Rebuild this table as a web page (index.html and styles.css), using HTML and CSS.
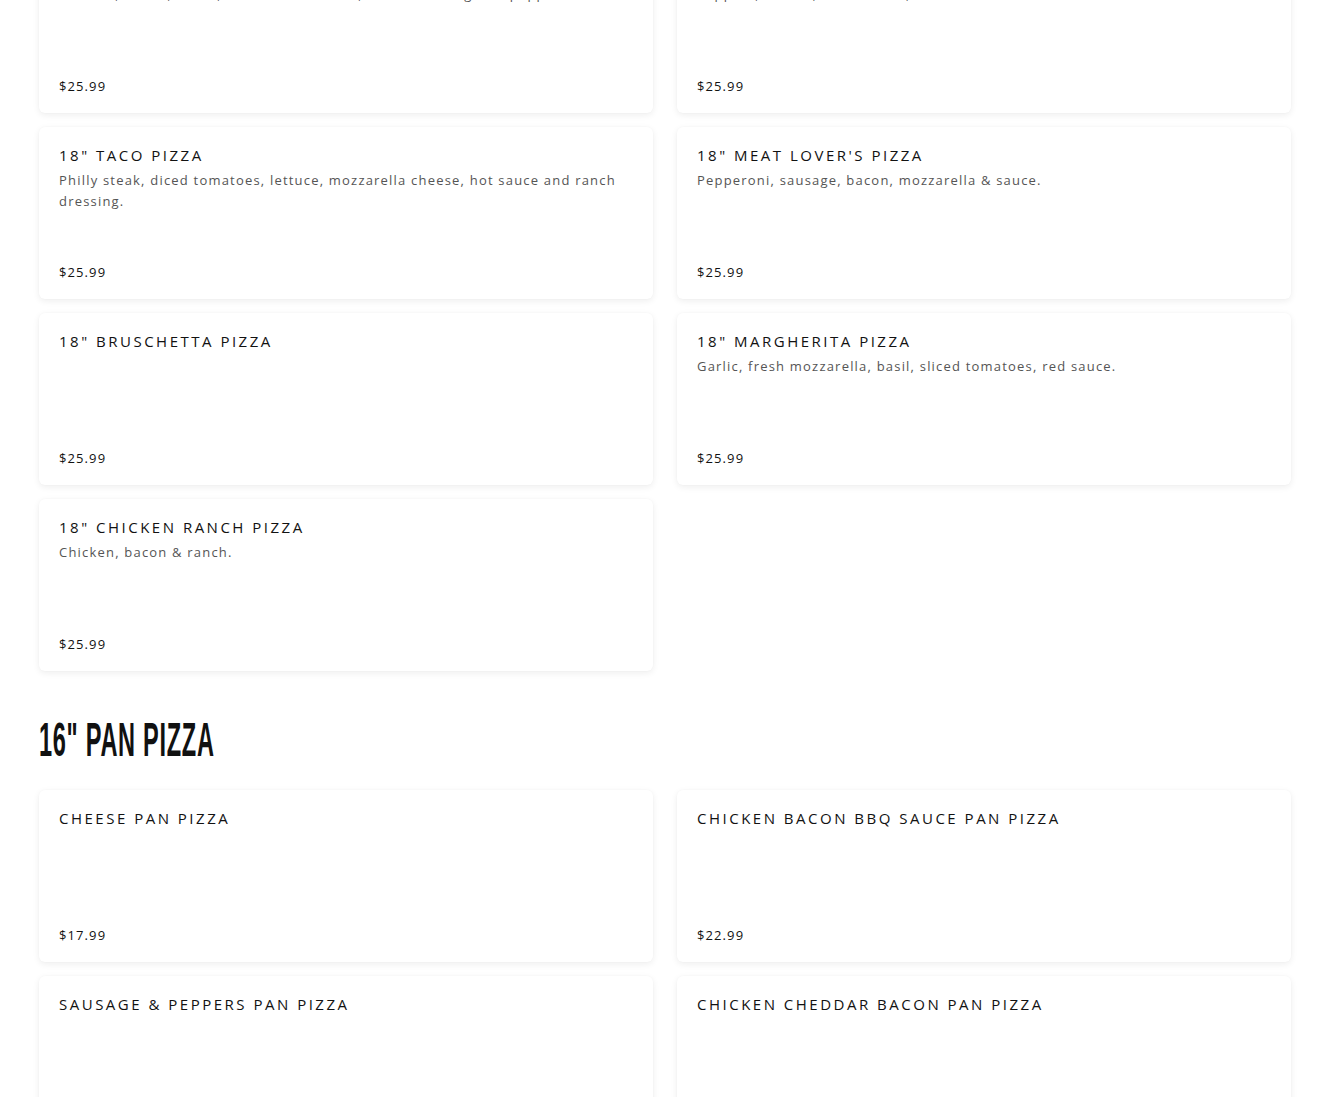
FILE: index.html
```html
<!DOCTYPE html>
<html lang="en">
<head>
<meta charset="utf-8">
<title>Menu</title>
<link rel="stylesheet" href="styles.css">
</head>
<body>
<main class="menu">
  <section class="section section--first">
    <div class="grid">
      <article class="card">
        <h3 class="card__title">18" Chicken Bacon Ranch Pizza</h3>
        <p class="card__desc">Chicken, bacon, ranch, mozzarella cheese, red onions &amp; green peppers.</p>
        <p class="card__price">$25.99</p>
      </article>
      <article class="card">
        <h3 class="card__title">18" Veggie Pizza</h3>
        <p class="card__desc">Peppers, onions, mushrooms, olives &amp; tomatoes.</p>
        <p class="card__price">$25.99</p>
      </article>
      <article class="card">
        <h3 class="card__title">18" Taco Pizza</h3>
        <p class="card__desc">Philly steak, diced tomatoes, lettuce, mozzarella cheese, hot sauce and ranch dressing.</p>
        <p class="card__price">$25.99</p>
      </article>
      <article class="card">
        <h3 class="card__title">18" Meat Lover's Pizza</h3>
        <p class="card__desc">Pepperoni, sausage, bacon, mozzarella &amp; sauce.</p>
        <p class="card__price">$25.99</p>
      </article>
      <article class="card">
        <h3 class="card__title">18" Bruschetta Pizza</h3>
        <p class="card__price">$25.99</p>
      </article>
      <article class="card">
        <h3 class="card__title">18" Margherita Pizza</h3>
        <p class="card__desc">Garlic, fresh mozzarella, basil, sliced tomatoes, red sauce.</p>
        <p class="card__price">$25.99</p>
      </article>
      <article class="card">
        <h3 class="card__title">18" Chicken Ranch Pizza</h3>
        <p class="card__desc">Chicken, bacon &amp; ranch.</p>
        <p class="card__price">$25.99</p>
      </article>
    </div>
  </section>

  <section class="section">
    <h2 class="section__heading"><span class="section__heading-text">16" Pan Pizza</span></h2>
    <div class="grid">
      <article class="card">
        <h3 class="card__title">Cheese Pan Pizza</h3>
        <p class="card__price">$17.99</p>
      </article>
      <article class="card">
        <h3 class="card__title">Chicken Bacon BBQ Sauce Pan Pizza</h3>
        <p class="card__price">$22.99</p>
      </article>
      <article class="card">
        <h3 class="card__title">Sausage &amp; Peppers Pan Pizza</h3>
        <p class="card__price">$22.99</p>
      </article>
      <article class="card">
        <h3 class="card__title">Chicken Cheddar Bacon Pan Pizza</h3>
        <p class="card__price">$22.99</p>
      </article>
    </div>
  </section>
</main>
</body>
</html>
```

FILE: styles.css
```css
* { box-sizing: border-box; }

html, body {
  margin: 0;
  padding: 0;
  background: #ffffff;
  overflow: hidden;
}

body {
  font-family: "Open Sans", "Lato", sans-serif;
  color: #121212;
}

.menu {
  padding: 0 39px;
}

.section--first {
  margin-top: -59px;
}

.section + .section {
  margin-top: 44px;
}

.section__heading {
  font-family: "Liberation Sans", Arial, sans-serif;
  font-weight: 700;
  font-size: 49px;
  line-height: 1;
  margin: 0 0 25px;
  text-transform: uppercase;
  color: #111;
  height: 50px;
}

.section__heading-text {
  display: inline-block;
  transform: scaleX(0.48);
  transform-origin: left top;
  letter-spacing: 1.5px;
}

.grid {
  display: grid;
  grid-template-columns: 1fr 1fr;
  column-gap: 24px;
  row-gap: 14px;
}

.card {
  height: 172px;
  background: #fff;
  border-radius: 6px;
  box-shadow: 0 2px 7px rgba(0, 0, 0, 0.07), 0 0 2px rgba(0, 0, 0, 0.03);
  padding: 18px 20px 18px;
  display: flex;
  flex-direction: column;
}

.card__title {
  margin: 0;
  font-size: 15px;
  font-weight: 400;
  line-height: 20px;
  letter-spacing: 2.5px;
  text-transform: uppercase;
  color: #121212;
}

.card__desc {
  margin: 5px 0 0;
  font-size: 13px;
  line-height: 21px;
  letter-spacing: 1.2px;
  color: #555;
}

.card__price {
  margin: auto 0 0;
  font-size: 13px;
  line-height: 18px;
  letter-spacing: 1.1px;
  color: #121212;
}
```
